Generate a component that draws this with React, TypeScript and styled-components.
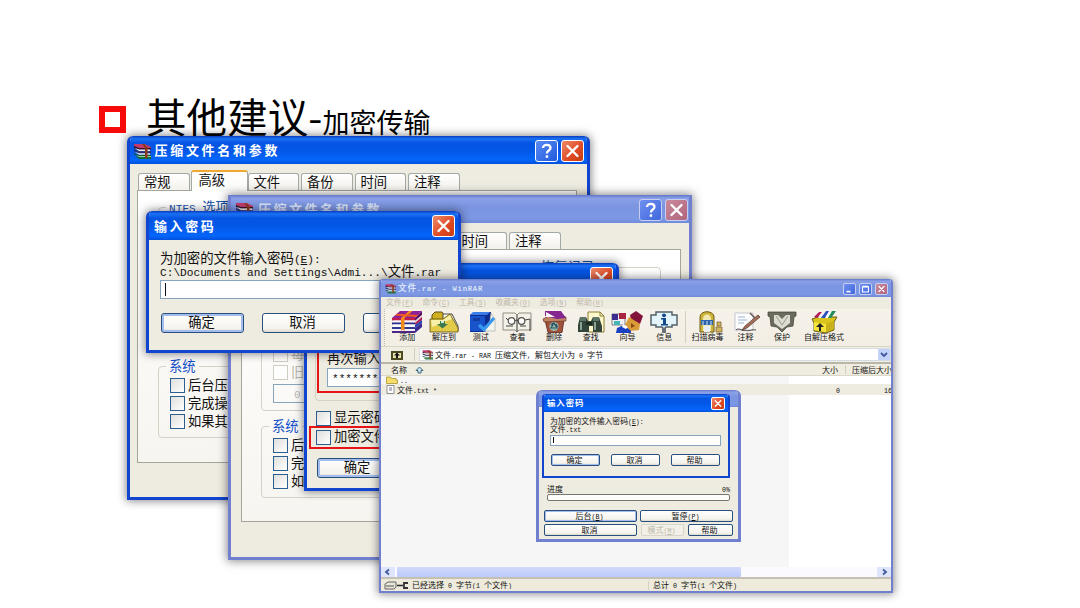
import React from 'react';
import styled, { createGlobalStyle, css } from 'styled-components';

const Global = createGlobalStyle`
  * { box-sizing: border-box; }
  body { margin: 0; background: #fff; overflow: hidden; }
`;

const cjk = `"Noto Sans CJK SC", sans-serif`;

const Slide = styled.main`
  position: relative;
  width: 1080px;
  height: 608px;
  overflow: hidden;
  background: #fff;
  font-family: ${cjk};
  color: #111;
`;

const Heading = styled.h1`
  display: flex;
  align-items: baseline;
  margin: 0;
  padding: 86px 0 0 99px;
  font-weight: 400;
  line-height: 60px;
  color: #000;
`;
const Bullet = styled.span`
  width: 27px;
  height: 27px;
  margin: 0 20px 1px 0;
  border: 6px solid #f80a0a;
`;
const Big = styled.span`
  font-size: 40.6px;
`;
const Small = styled.span`
  font-size: 27px;
`;

/* Text whose latin characters take half of the width of a han character. */
const Line = styled.span<{ $s?: number; $c?: string; $b?: boolean; $ls?: number }>`
  display: block;
  flex: none;
  white-space: pre;
  font-size: ${p => p.$s ?? 13.3}px;
  line-height: 0.88;
  height: 1em;
  color: ${p => p.$c ?? 'inherit'};
  font-weight: ${p => (p.$b ? 700 : 400)};
  letter-spacing: ${p => p.$ls ?? 0}px;
`;
const Half = styled.span`
  font-family: "Liberation Mono", monospace;
  font-size: 0.833em;
`;
const Key = styled.span`
  text-decoration: underline;
`;
type TP = { children: string; s?: number; c?: string; b?: boolean; ls?: number };
const T = ({ children, s, c, b, ls }: TP) => (
  <Line $s={s} $c={c} $b={b} $ls={ls}>
    {children.split(/([\x20-\x7e]+)/).map((t, i) => {
      if (i % 2 === 0) return t;
      const m = t.match(/^\(([A-Z])\)(.*)$/);
      return m ? <Half key={i}>(<Key>{m[1]}</Key>){m[2]}</Half> : <Half key={i}>{t}</Half>;
    })}
  </Line>
);

const Win = styled.section<{ $x: number; $y: number; $w: number; $h: number; $faded?: boolean; $e?: number; $flat?: boolean; $square?: boolean }>`
  position: absolute;
  isolation: isolate;
  left: ${p => p.$x}px;
  top: ${p => p.$y}px;
  width: ${p => p.$w}px;
  height: ${p => p.$h}px;
  display: flex;
  flex-direction: column;
  overflow: hidden;
  background: #eeebe0;
  border: ${p => p.$e ?? 3}px solid ${p => (p.$faded ? '#7080cf' : '#1144cf')};
  border-top: 0;
  border-radius: ${p => (p.$square ? '0' : p.$e === 2 ? '4px 4px 0 0' : '6px 6px 0 0')};
  box-shadow: ${p => (p.$flat ? 'none' : '0 0 9px 1px rgba(20, 20, 30, 0.5)')};
`;
const TitleBar = styled.header<{ $h: number; $faded?: boolean; $pl?: number; $pr?: number }>`
  flex: none;
  display: flex;
  align-items: center;
  height: ${p => p.$h}px;
  margin: 0 -3px;
  padding: 1px ${p => p.$pr ?? 6}px 0 ${p => p.$pl ?? 7}px;
  color: ${p => (p.$faded ? '#d9e2f8' : '#fff')};
  background: ${p =>
    p.$faded
      ? 'linear-gradient(#6277c8 0, #8aa0e8 12%, #7b95e0 40%, #7c98e4 85%, #6f8ad8)'
      : 'linear-gradient(#0a3cc0 0, #1b72f5 10%, #0554e2 25%, #0458e8 55%, #0466fb 85%, #0350dc)'};
`;
const TitleText = styled.span<{ $ml: number }>`
  margin-left: ${p => p.$ml}px;
`;
const Push = styled.span`
  flex: 1;
`;
const CapBtn = styled.span<{ $k: 'help' | 'close' | 'blue'; $s?: number; $faded?: boolean }>`
  flex: none;
  display: flex;
  width: ${p => p.$s ?? 23}px;
  height: ${p => (p.$s ?? 23) - 1}px;
  margin-left: ${p => (p.$s ? 3 : 3.5)}px;
  border: 1px solid ${p => (p.$faded ? '#c6cff2' : '#fff')};
  border-radius: ${p => (p.$s ? 2 : 3)}px;
  background: ${p =>
    p.$k === 'close'
      ? p.$faded
        ? 'linear-gradient(135deg, #c98a9c, #b0647c)'
        : 'linear-gradient(135deg, #ee8a6c, #de4a22 60%, #c83c14)'
      : p.$faded
        ? 'linear-gradient(135deg, #6f8ff0, #4068dc)'
        : 'linear-gradient(135deg, #5a8cf4, #2058dc)'};
  svg { width: 100%; height: 100%; }
`;
const Close = ({ s, faded }: { s?: number; faded?: boolean }) => (
  <CapBtn $k="close" $s={s} $faded={faded}>
    <svg viewBox="0 0 20 20"><path d="M5 5l10 10M15 5L5 15" stroke="#fff" strokeWidth="2.4" strokeLinecap="round" /></svg>
  </CapBtn>
);
const Help = ({ faded }: { faded?: boolean }) => (
  <CapBtn $k="help" $faded={faded}>
    <svg viewBox="0 0 20 20" fill="none">
      <path d="M6.5 7C6.5 2.8 14 3 14 7C14 9.6 10.4 9.5 10.4 12.5" stroke="#fff" strokeWidth="2.3" />
      <rect x="9.2" y="14.3" width="2.5" height="2.5" fill="#fff" />
    </svg>
  </CapBtn>
);

const BooksSvg = styled.svg`
  flex: none;
`;
const Books = ({ w = 18, h = 16 }: { w?: number; h?: number }) => (
  <BooksSvg width={w} height={h} viewBox="0 0 18 16">
    <path d="M1 1h11l6 3v1H6L1 3z" fill="#c23a6c" />
    <path d="M1 3l5 2h12v1.500H6L1 5z" fill="#3a1020" />
    <path d="M2 5l4 1.500h11v1.800H6z" fill="#f6e8dc" />
    <path d="M1 6l5 2.300h12v2H6L1 8z" fill="#2d2c6c" />
    <path d="M2 9l4 1.200h11v1.500H6z" fill="#eadfe0" />
    <path d="M1 10l5 2h12v1.300H6l-5-2z" fill="#17522c" />
    <path d="M3 12l3 1h12v1H6z" fill="#8fd49a" />
    <path d="M2 13l4 1h12v2H6z" fill="#186a34" />
    <path d="M9 1h2.500l3 3.500V15h-2.500V5z" fill="#8a3a1c" />
  </BooksSvg>
);

const Tabs = styled.nav`
  flex: none;
  display: flex;
  align-items: flex-end;
  height: 26px;
  padding-left: 8px;
`;
const Tab = styled.span<{ $on?: boolean }>`
  flex: none;
  display: flex;
  justify-content: flex-start;
  width: ${p => (p.$on ? 57 : 51.5)}px;
  height: ${p => (p.$on ? 21 : 17)}px;
  margin-right: ${p => (p.$on ? 0 : 2)}px;
  padding: ${p => (p.$on ? '2px 0 0 7px' : '2px 0 0 5px')};
  margin-bottom: ${p => (p.$on ? -1 : 0)}px;
  border: 1px solid #a3a9a6;
  border-bottom: 0;
  border-radius: 3px 3px 0 0;
  background: linear-gradient(#fff, #f3f1ea);
  ${p => p.$on && css`
    border-top: 2px solid #f0a830;
    background: #fdfdfb;
    z-index: 1;
  `}
  &:first-child { margin-right: 1px; }
`;
const Panel = styled.div<{ $ml?: number }>`
  flex: none;
  width: 440px;
  height: 273px;
  margin-left: ${p => p.$ml ?? 7}px;
  border: 1px solid #a5a59c;
  background: linear-gradient(#fff, #f7f5f0);
  display: flex;
  flex-direction: column;
`;
const TabRow = () => (
  <Tabs>
    <Tab><T>常规</T></Tab>
    <Tab $on><T>高级</T></Tab>
    {['文件', '备份', '时间', '注释'].map(t => <Tab key={t}><T>{t}</T></Tab>)}
  </Tabs>
);
const Group = styled.fieldset<{ $w: number; $h: number; $mt: number; $ml?: number; $pl?: number }>`
  flex: none;
  width: ${p => p.$w}px;
  height: ${p => p.$h}px;
  min-width: 0;
  margin: ${p => p.$mt}px 0 0 ${p => p.$ml ?? 20}px;
  padding: 3px 0 0 ${p => p.$pl ?? 11}px;
  border: 1px solid #d3d2c6;
  border-radius: 4px;
`;
const Legend = styled.legend<{ $ml?: number }>`
  margin-left: ${p => p.$ml ?? -4}px;
  padding: 0 3px;
`;
const CheckRow = styled.label<{ $off?: boolean }>`
  display: flex;
  align-items: center;
  gap: 3px;
  height: 18px;
  color: ${p => (p.$off ? '#b9b7ab' : '#111')};
`;
const Box = styled.span<{ $off?: boolean }>`
  flex: none;
  width: 15px;
  height: 15px;
  border: 1px solid ${p => (p.$off ? '#cfcdc2' : '#2a5f8f')};
  background: ${p => (p.$off ? '#fdfdfb' : 'linear-gradient(135deg, #dfe0dc, #fff)')};
`;
const Check = ({ children, off }: { children: string; off?: boolean }) => (
  <CheckRow $off={off}><Box $off={off} /><T>{children}</T></CheckRow>
);
const Spin = styled.div`
  display: flex;
  align-items: center;
  width: 90px;
  height: 19px;
  margin-top: 3px;
  padding-left: 20px;
  border: 1px solid #86a4bc;
`;
const SystemGroup = ({ mt, ml }: { mt: number; ml?: number }) => (
  <Group $w={190} $h={78} $mt={mt} $ml={ml}>
    <Legend><T c="#1450c8">系统</T></Legend>
    <Check>后台压缩</Check>
    <Check>完成操作后关闭</Check>
    <Check>如果其它副本</Check>
  </Group>
);

const Body = styled.div<{ $p: string }>`
  flex: 1;
  min-height: 0;
  display: flex;
  flex-direction: column;
  padding: ${p => p.$p};
`;
const Row = styled.div<{ $g: number; $mt?: number; $pl?: number }>`
  flex: none;
  display: flex;
  gap: ${p => p.$g}px;
  margin-top: ${p => p.$mt ?? 0}px;
  padding-left: ${p => p.$pl ?? 0}px;
`;
const Button = styled.span<{ $w: number; $h: number; $def?: boolean; $off?: boolean }>`
  flex: none;
  display: flex;
  align-items: center;
  justify-content: center;
  width: ${p => p.$w}px;
  height: ${p => p.$h}px;
  padding-right: 2px;
  border: 1px solid ${p => (p.$off ? '#d8d5c8' : '#28507e')};
  border-radius: ${p => (p.$h > 15 ? 3 : 2)}px;
  background: ${p => (p.$off ? '#f2f0e8' : 'linear-gradient(#fff, #f4f3ed 80%, #dcd8ce)')};
  ${p => p.$def && css`box-shadow: inset 0 0 0 ${p.$h > 15 ? 2 : 1}px #a4bdec;`}
`;
const Input = styled.div<{ $h: number; $w?: number; $mt?: number }>`
  flex: none;
  display: flex;
  align-items: center;
  width: ${p => (p.$w ? p.$w + 'px' : 'auto')};
  height: ${p => p.$h}px;
  margin-top: ${p => p.$mt ?? 0}px;
  padding-left: ${p => (p.$h > 14 ? 4 : 2)}px;
  border: 1px solid #86a4bc;
  background: #fff;
`;
const Caret = styled.span`
  width: 1px;
  height: 75%;
  background: #111;
`;
const RedFrame = styled.div<{ $h: number; $w: number; $m: string; $p: string }>`
  flex: none;
  width: ${p => p.$w}px;
  height: ${p => p.$h}px;
  margin: ${p => p.$m};
  padding: ${p => p.$p};
  border: 2px solid #e61414;
`;
const PassGroup = styled.div`
  flex: none;
  height: 109px;
  width: 290px;
  margin-left: 8px;
  border: 1px solid #d3d2c6;
  border-radius: 4px;
`;

const MenuBar = styled.div`
  flex: none;
  display: flex;
  gap: 9.2px;
  height: 12px;
  padding: 2px 0 0 5px;
`;
const ToolBar = styled.div`
  flex: none;
  display: flex;
  align-items: flex-start;
  height: 37px;
  margin-left: 3px;
  padding: 2px 0 0 4px;
  border-left: 1px dotted #bdb9aa;
  background: linear-gradient(#f6f2ea, #f2eee4);
`;
const Tool = styled.span<{ $w: number }>`
  flex: none;
  display: flex;
  flex-direction: column;
  align-items: center;
  width: ${p => p.$w}px;
  svg { width: 32px; height: 22px; }
`;
const VSep = styled.span<{ $m: string; $h: number }>`
  flex: none;
  width: 1px;
  height: ${p => p.$h}px;
  margin: ${p => p.$m};
  background: #d3cfc2;
`;
const AddressBar = styled.div`
  flex: none;
  display: flex;
  align-items: center;
  height: 16px;
  padding-left: 10px;
  border-top: 1px solid #d8d4c6;
  background: #f0ede3;
`;
const Combo = styled.div`
  flex: 1;
  display: flex;
  align-items: center;
  gap: 2px;
  height: 13px;
  padding-left: 2px;
  border: 1px solid #d6dce4;
  background: #fff;
`;
const Drop = styled.span`
  display: flex;
  width: 12px;
  height: 11px;
  background: #c4d2fa;
  border-radius: 1px;
`;
const ListHead = styled.div`
  flex: none;
  display: flex;
  align-items: center;
  height: 14px;
  padding-left: 10px;
  border-top: 2px solid #bab7aa;
  border-bottom: 1px solid #dcd8c8;
  background: #efece0;
`;
const List = styled.div`
  flex: 1;
  background: linear-gradient(90deg, #f6f6f6 408px, #fff 408px);
`;
const ListRow = styled.div<{ $hi?: boolean }>`
  display: flex;
  align-items: center;
  gap: 2px;
  height: ${p => (p.$hi ? 11 : 8)}px;
  padding-left: 5px;
  background: ${p => (p.$hi ? '#eeece1' : 'transparent')};
`;
const ScrollBar = styled.div`
  flex: none;
  display: flex;
  align-items: center;
  height: 10px;
  background: #fbfbff;
`;
const Thumb = styled.span`
  width: 344px;
  height: 10px;
  margin: 0 auto 0 2px;
  border-radius: 1px;
  background: linear-gradient(#d2dafb, #bccafb);
`;
const Arrow = styled.span`
  display: flex;
  width: 14px;
  height: 10px;
  background: #dfe5fc;
`;
const StatusBar = styled.footer`
  flex: none;
  display: flex;
  align-items: center;
  height: 14px;
  padding-left: 3px;
  border-top: 2px solid #c4c1b4;
  background: #eeebdc;
`;
const Cell = styled.span<{ $w: number; $ml?: number }>`
  flex: none;
  width: ${p => p.$w}px;
  margin-left: ${p => p.$ml ?? 0}px;
  overflow: hidden;
`;
const Bar = styled.div`
  flex: none;
  height: 7px;
  margin: 1px 8px 0 8px;
  border: 1px solid #77776f;
  border-radius: 2px;
  background: #fdfdfb;
`;
const Spread = styled.div`
  flex: none;
  display: flex;
  justify-content: space-between;
  padding: 0 8px;
`;

const icons: Record<string, React.ReactNode> = {
  添加: <>
    <path d="M1 7L9 0h22l-7 7z" fill="#8e1f96" /><path d="M24 7l7-7v4l-7 6z" fill="#5c1064" />
    <path d="M1 7h23v2.500H1z" fill="#c01c4c" /><path d="M2 9.500h22v2H2z" fill="#fbf4f6" />
    <path d="M24 10l7-6v2l-7 6z" fill="#e0d6e0" /><path d="M1 11.500h23v2H1z" fill="#27308c" /><path d="M24 12l7-6v3l-7 5z" fill="#b01c48" />
    <path d="M2 13.500h22v2.500H2z" fill="#fafafc" /><path d="M24 14l7-5v3l-7 5z" fill="#2c44b0" /><path d="M1 16h23v2H1z" fill="#303a90" />
    <path d="M2 18h22v2H2z" fill="#f4f2f8" /><path d="M1 20h23v2H1z" fill="#4c2484" /><path d="M24 17l7-5v4l-7 6z" fill="#3a2a90" />
    <path d="M10 7h3.500v13l-2-1.500L10 20zM10 7l8-7h3.500l-8 7z" fill="#f28a1c" /><path d="M4 4.500l2-1.800 21 1.400-2 1.900z" fill="#f05a1c" />
  </>,
  解压到: <>
    <path d="M4 4l3-3h7l2 3h4v16H4z" fill="#cfae20" stroke="#5e4e10" /><path d="M15 3h9l6 12v5H15z" fill="#fffbe8" stroke="#4c4c44" />
    <path d="M2 8h13l7-5 8 14v4H2z" fill="#e2cb48" stroke="#5e4e10" strokeWidth=".8" /><path d="M3 9h12l7-5 2 4-20 8z" fill="#f8f0a8" />
    <path d="M12 10h5v3h3l-5.500 4.500L9 13h3z" fill="#3c7a50" /><path d="M13 10h3v2h-3z" fill="#cdebd4" />
  </>,
  测试: <>
    <path d="M5 4l4-3h17v3l-3 14-3 3H5z" fill="#0e2c90" /><path d="M5 5h15v15H5z" fill="#1853cc" /><path d="M8 1h17l-3 3H5z" fill="#3a7ce8" />
    <path d="M26 2l4 6v12H18l7-9z" fill="#f4f4ee" stroke="#a8aca8" strokeWidth=".7" /><path d="M8 7h7v3H8z" fill="#123ca4" /><path d="M14 14l5 4.500L29 7" stroke="#3a98ee" strokeWidth="3.2" fill="none" />
  </>,
  查看: <>
    <path d="M2 2h12l2 2 2-2h12v17H18l-2 2-2-2H2z" fill="#f3f0e8" stroke="#8f8c84" /><path d="M16 4v17" stroke="#55534c" strokeWidth="1.200" />
    <circle cx="10.500" cy="10" r="3.300" fill="#fff" stroke="#55534c" strokeWidth="1.200" /><circle cx="20.500" cy="10" r="3.300" fill="#fff" stroke="#55534c" strokeWidth="1.200" />
    <path d="M13.800 10q2-2 3.500 0M24 9l5-1v12M5 7l2 2M5 15h7M19 15h6" stroke="#44423c" fill="none" />
  </>,
  删除: <>
    <path d="M7 9h19l-2 12.500H10z" fill="#a2523c" stroke="#5c2418" strokeWidth=".8" /><path d="M5 8l6-3 17 1v4L6 11z" fill="#c08464" stroke="#6a3020" strokeWidth=".7" /><path d="M7 5V0l16 0 5 7-9 1z" fill="#84268e" />
    <path d="M8 1l9 5H8z" fill="#faf6fa" /><circle cx="16" cy="15.500" r="4.600" fill="#98b4a8" /><path d="M13 17l3-5 3 5zM13 14l2-2M18 13l1.500 3" stroke="#2a5864" fill="none" strokeWidth="1.200" />
  </>,
  查找: <>
    <path d="M13 1h12l4 4v16H13z" fill="#fff8cc" stroke="#8b7c30" /><path d="M25 1v4h4" fill="none" stroke="#8b7c30" />
    <path d="M5 6h6l2 4h3l2-4h6l3 9v6h-9v-6h-4v6H3v-7z" fill="#33443a" />
    <path d="M5 6h6v4H5zM18 6h6v4h-6z" fill="#5e7468" /><path d="M6 11v8M20 11v8" stroke="#8ba294" strokeWidth="2" /><path d="M11 11h6v3h-6z" fill="#1c2a22" />
  </>,
  向导: <>
    <path d="M1 3h13v11H1z" fill="#eef0f6" stroke="#555" strokeWidth=".7" /><path d="M1 3h6v6H1z" fill="#3c2c90" /><path d="M8 2h7v6H8z" fill="#a82440" /><path d="M3 10h6v4H3z" fill="#46b4b8" />
    <path d="M19 4l6-4 7 5-3 8-9-4z" fill="#82143c" /><path d="M18 6l11 7-1 6-9 1-5-6z" fill="#d99a38" /><path d="M20 12l4 3-4 2z" fill="#8a4a18" />
    <path d="M6 17l7-3 7 6v2H5z" fill="#1840c0" /><path d="M12 13l5 3-2 2-4-2z" fill="#fff" />
  </>,
  信息: <>
    <path d="M8 1h16v3h5v10h-5v2h-6l-2 2-2-2H8v-2H3V4h5z" fill="#e3f4fa" stroke="#54606a" strokeWidth="1.500" /><path d="M14 17h4v5h-4z" fill="#6a7078" />
    <circle cx="16" cy="4.300" r="1.900" fill="#12488c" /><path d="M13 7h5v6h2v1.500h-7V13h2V8.500h-2z" fill="#12488c" />
  </>,
  扫描病毒: <>
    <path d="M8 21V6c0-7 14-7 14 0v15z" fill="#cdb43c" stroke="#6d5a14" /><path d="M11 8c0-6 8-6 8 0v12h-8z" fill="#f2eab4" /><path d="M9 9h12v5H9z" fill="#2e64ac" /><path d="M12 15h6v6h-6z" fill="#e8eef4" />
    <path d="M11 10v4M15 10v4M19 10v4" stroke="#cfe4fa" /><path d="M25 11h4v4h-4zM24 16h6v5h-6z" fill="#d2b460" stroke="#715a20" strokeWidth=".7" />
  </>,
  注释: <>
    <path d="M5 2h18v17H5z" fill="#fcfcfc" stroke="#c4c6cc" /><path d="M8 6h7M8 9h9M8 12h6" stroke="#9db4d4" /><path d="M28 4L15 15l-3 4 5-2L30 6z" fill="#a8705a" stroke="#4a3028" strokeWidth=".7" />
    <path d="M20 2l5 5" stroke="#6a5a54" strokeWidth="1.500" /><path d="M6 19c4-3 6 2 9 0 3 2 7-1 11 0" stroke="#444" fill="none" />
  </>,
  保护: <>
    <path d="M2 1h28v4l-2 1-1 9-6 1-5 5-5-5-6-1-1-9-2-1z" fill="#6c6c5e" stroke="#3c3c34" strokeWidth=".7" /><path d="M8 4h4l4 4 4-4h4v8l-8 6-8-6z" fill="#dcdcd2" /><path d="M10 5l6 9 6-9" stroke="#9a9a8c" fill="none" />
  </>,
  自解压格式: <>
    <path d="M4 8l6-2h19l-3 5v8l-8 3-12-2V12z" fill="#d8c41c" stroke="#6c5e10" /><path d="M6 11l12 2v8L6 19z" fill="#f4e43c" /><path d="M18 13l8-3v8l-8 3z" fill="#c8b018" />
    <path d="M6 6l5-5h3l-5 6z" fill="#b01c58" /><path d="M10 7l5-6h3l-5 6z" fill="#f4f0fa" /><path d="M13 7l5-7h3l-4 7z" fill="#2a50c0" /><path d="M17 7l4-6h3l-4 6z" fill="#fff" /><path d="M20 7l4-7h4l-5 7z" fill="#208a58" />
    <path d="M11 20v-4H8l4-4 4 4h-3v4z" fill="#222" />
  </>,
};
const toolWidths: Record<string, number> = { 扫描病毒: 40, 注释: 36, 保护: 37, 自解压格式: 47 };
const ToolItem = ({ name }: { name: string }) => (
  <Tool $w={toolWidths[name] ?? 36.7}>
    <svg viewBox="0 0 32 22">{icons[name]}</svg>
    <T s={8}>{name}</T>
  </Tool>
);
const Chevron = ({ d }: { d: string }) => (
  <svg width="100%" height="100%" viewBox="0 0 12 10"><path d={d} fill="none" stroke="#41589c" strokeWidth="1.8" /></svg>
);

export default function App() {
  return (
    <Slide>
      <Global />
      <Heading>
        <Bullet /><Big>其他建议-</Big><Small>加密传输</Small>
      </Heading>

      <Win $x={127} $y={136} $w={463} $h={364}>
        <TitleBar $h={28} $pl={6}>
          <Books />
          <TitleText $ml={3.5}><T s={13} b ls={2.7}>压缩文件名和参数</T></TitleText>
          <Push /><Help /><Close />
        </TitleBar>
        <TabRow />
        <Panel>
          <Group $w={400} $h={120} $mt={10}><Legend><T c="#1450a8">NTFS 选项</T></Legend></Group>
          <SystemGroup mt={39} />
        </Panel>
      </Win>

      <Win $x={228} $y={195} $w={464} $h={365} $faded $square>
        <TitleBar $h={28} $pl={7} $pr={4} $faded>
          <Books />
          <TitleText $ml={5}><T s={13} b ls={2.5}>压缩文件名和参数</T></TitleText>
          <Push /><Help faded /><Close faded />
        </TitleBar>
        <TabRow />
        <Panel $ml={10}>
          <Row $g={10}>
            <Group $w={190} $h={151} $mt={10} $ml={19}>
              <Legend><T c="#1450a8">NTFS 选项</T></Legend>
              <Row $g={0} $mt={69} />
              <Check off>每个文件</Check>
              <Check off>旧的分卷</Check>
              <Spin><T c="#bbb">0</T></Spin>
            </Group>
            <Group $w={200} $h={151} $mt={11} $ml={0} $pl={80}>
              <Legend><T c="#1450a8">恢复记录</T></Legend>
            </Group>
          </Row>
          <SystemGroup mt={8} ml={19} />
        </Panel>
      </Win>

      <Win $x={304} $y={263} $w={315} $h={228}>
        <TitleBar $h={29}><T s={13} b ls={2.6}>带密码压缩</T><Push /><Close /></TitleBar>
        <Body $p="0">
          <PassGroup>
            <RedFrame $w={260} $h={100} $m="0 0 0 1px" $p="57px 0 0 8px">
              <T>再次输入密码以确认</T>
              <Input $h={19} $w={230} $mt={3}><T>************</T></Input>
            </RedFrame>
          </PassGroup>
          <Row $g={0} $mt={8} $pl={9}><Check>显示密码</Check></Row>
          <RedFrame $w={160} $h={23} $m="-1px 0 0 2px" $p="0 0 0 5px"><Check>加密文件名</Check></RedFrame>
          <Row $g={18} $mt={9} $pl={10}>
            <Button $w={82} $h={20} $def><T>确定</T></Button>
            <Button $w={82} $h={20}><T>取消</T></Button>
          </Row>
        </Body>
      </Win>

      <Win $x={146} $y={211} $w={315} $h={142}>
        <TitleBar $h={29} $pl={8}><T s={13} b ls={2.6}>输入密码</T><Push /><Close /></TitleBar>
        <Body $p="12px 11px 0">
          <T s={13.4}>为加密的文件输入密码(E):</T>
          <T s={13.4}>C:\Documents and Settings\Admi...\文件.rar</T>
          <Input $h={19} $mt={1}><Caret /></Input>
          <Row $g={18} $mt={14} $pl={1}>
            <Button $w={83} $h={20} $def><T>确定</T></Button>
            <Button $w={83} $h={20}><T>取消</T></Button>
            <Button $w={83} $h={20}><T>帮助</T></Button>
          </Row>
        </Body>
      </Win>

      <Win $x={379} $y={279} $w={514} $h={314} $faded $e={2}>
        <TitleBar $h={18} $pl={7} $faded>
          <Books w={11} h={11} />
          <TitleText $ml={2}><T s={8.6} b ls={0.8}>文件.rar - WinRAR</T></TitleText>
          <Push />
          <CapBtn $k="blue" $s={13} $faded><svg viewBox="0 0 20 20"><path d="M4 15h8" stroke="#fff" strokeWidth="3.5" /></svg></CapBtn>
          <CapBtn $k="blue" $s={13} $faded><svg viewBox="0 0 20 20"><path d="M4 6h12v10H4zM4 4.500h12" fill="none" stroke="#fff" strokeWidth="2.2" /></svg></CapBtn>
          <Close s={13} faded />
        </TitleBar>
        <MenuBar>
          {['文件(F)', '命令(C)', '工具(S)', '收藏夹(O)', '选项(N)', '帮助(H)'].map(m => <T key={m} s={7.8} c="#bcb8aa">{m}</T>)}
        </MenuBar>
        <ToolBar>
          {['添加', '解压到', '测试', '查看', '删除', '查找', '向导', '信息'].map(n => <ToolItem key={n} name={n} />)}
          <VSep $h={32} $m="0 2px 0 2px" />
          {['扫描病毒', '注释', '保护', '自解压格式'].map(n => <ToolItem key={n} name={n} />)}
        </ToolBar>
        <AddressBar>
          <svg width="12" height="10" viewBox="0 0 12 10"><path d="M0 1h12v9H0z" fill="#4c4a22" /><path d="M2 3h8v5H2z" fill="#e8e2ac" /><path d="M6 2.500l3 3H7V8H5V5.500H3z" fill="#111" /></svg>
          <VSep $h={13} $m="0 4px 0 11px" />
          <Combo>
            <Books w={11} h={11} />
            <T s={8}>文件.rar - RAR 压缩文件, 解包大小为 0 字节</T>
            <Push /><Drop><Chevron d="M3 3.500l3 3 3-3" /></Drop>
          </Combo>
        </AddressBar>
        <ListHead>
          <Cell $w={24}><T s={8}>名称</T></Cell>
          <svg width="9" height="8" viewBox="0 0 9 8"><path d="M4.500 1L8 4.500H6V7H3V4.500H1z" fill="#cfe6ee" stroke="#3a6a80" /></svg>
          <Push />
          <T s={8}>大小</T>
          <VSep $h={9} $m="0 6px 0 7px" />
          <Cell $w={39}><T s={8}>压缩后大小</T></Cell>
        </ListHead>
        <List>
          <ListRow><svg width="12" height="8" viewBox="0 0 12 8"><path d="M.5 7.500V1h4l1 1.500H10v1.500h1.500v3.500z" fill="#f4dd68" stroke="#a08820" strokeWidth=".7" /></svg><T s={8}>..</T></ListRow>
          <ListRow $hi>
            <svg width="9" height="9" viewBox="0 0 9 9"><path d="M1 .5h7v8H1z" fill="#fff" stroke="#777" strokeWidth=".8" /><path d="M3 3h3M3 5h3" stroke="#779" /></svg>
            <T s={8}>文件.txt *</T>
            <Push />
            <T s={8}>0</T>
            <Cell $w={7} $ml={42}><T s={8}>16</T></Cell>
          </ListRow>
        </List>
        <ScrollBar>
          <Arrow><Chevron d="M7 2.500L4 5l3 2.500" /></Arrow><Thumb /><Arrow><Chevron d="M5 2.500L8 5 5 7.500" /></Arrow>
        </ScrollBar>
        <StatusBar>
          <svg width="25" height="9" viewBox="0 0 25 9"><path d="M1 3l3-2h8v5l-2 2H1z" fill="#e8e8da" stroke="#555" strokeWidth=".9" /><path d="M2 5h8" stroke="#555" /><path d="M13 4.500h6" stroke="#333" strokeWidth="1.600" /><path d="M24 2h-4v5h4" fill="none" stroke="#333" strokeWidth="1.800" /></svg>
          <Cell $w={236} $ml={3}><T s={8}>已经选择 0 字节(1 个文件)</T></Cell>
          <VSep $h={9} $m="0 4px 0 0" />
          <T s={8}>总计 0 字节(1 个文件)</T>
        </StatusBar>
      </Win>

      <Win $x={536} $y={390} $w={205} $h={152} $faded $flat>
        <TitleBar $h={17} $faded />
        <Body $p="78px 0 0">
          <Spread><T s={8}>进度</T><T s={8}>0%</T></Spread>
          <Bar />
          <Body $p="9px 0 0 5px">
            <Row $g={3}>
              <Button $w={93} $h={12} $def><T s={8}>后台(B)</T></Button>
              <Button $w={93} $h={12}><T s={8}>暂停(P)</T></Button>
            </Row>
            <Row $g={4} $mt={2}>
              <Button $w={93} $h={12}><T s={8}>取消</T></Button>
              <Button $w={43} $h={12} $off><T s={8} c="#bbb8a8">模式(M)</T></Button>
              <Button $w={45} $h={12}><T s={8}>帮助</T></Button>
            </Row>
          </Body>
        </Body>
      </Win>

      <Win $x={542} $y={394} $w={188} $h={84} $e={2} $flat>
        <TitleBar $h={18} $pl={6}><T s={8.4} b ls={1}>输入密码</T><Push /><Close s={14} /></TitleBar>
        <Body $p="6px 7px 0 6px">
          <T s={7.8}>为加密的文件输入密码(E):</T>
          <T s={7.8}>文件.txt</T>
          <Input $h={11} $mt={1}><Caret /></Input>
          <Row $g={11} $mt={8} $pl={1}>
            <Button $w={49} $h={12} $def><T s={8}>确定</T></Button>
            <Button $w={49} $h={12}><T s={8}>取消</T></Button>
            <Button $w={49} $h={12}><T s={8}>帮助</T></Button>
          </Row>
        </Body>
      </Win>
    </Slide>
  );
}
